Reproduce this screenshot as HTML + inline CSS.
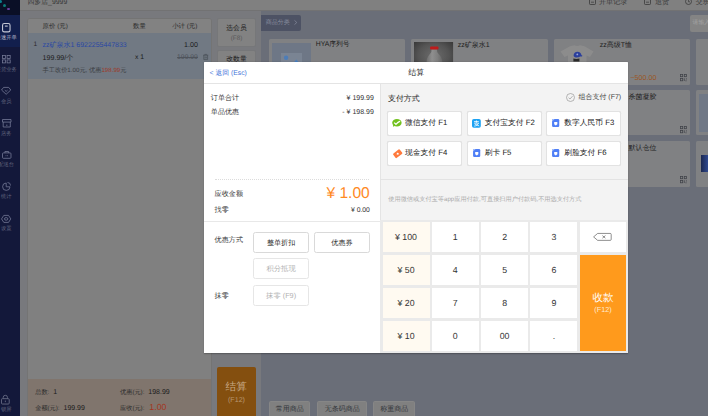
<!DOCTYPE html>
<html lang="zh">
<head>
<meta charset="utf-8">
<title>结算</title>
<style>
*{box-sizing:border-box;margin:0;padding:0}
html,body{width:708px;height:416px;overflow:hidden}
body{position:relative;text-rendering:geometricPrecision;background:#78797d;font-family:"Liberation Sans",sans-serif;color:#1c1c1c;font-size:7px;line-height:1}
.a{position:absolute}
.t{position:absolute;white-space:nowrap;line-height:1}
.r{text-align:right}
.c{text-align:center}
svg{position:absolute;overflow:visible}
/* dimmed page */
#top{left:0;top:0;width:708px;height:11.2px;background:#808080;border-bottom:1px solid #727273}
#side{left:0;top:0;width:20.3px;height:416px;background:#13183a}
#logo{left:0;top:0;width:20.3px;height:15.2px;background:#0a0f26}
#act{left:0;top:15.2px;width:20.3px;height:31.5px;background:#121f4d}
.sl{color:#62667f;font-size:5.3px;width:30px;left:-8.8px;text-align:center}
#right{left:261.2px;top:11px;width:447px;height:406px;background:#6a6e78}
#cart{left:27.3px;top:18.4px;width:184.5px;height:400px;background:#808080;border:0.7px solid #747474;border-radius:3px 3px 0 0;overflow:hidden}
.card{background:#808183;border-radius:1.5px}
.mb{background:#828282;border:0.6px solid #767779;border-radius:2px}
.tab{top:401.4px;height:20px;background:#808080;border:.6px solid #868686;border-radius:1.5px}
/* modal */
#modal{left:203.9px;top:61.8px;width:424.1px;height:291.5px;background:#fff;border-radius:.6px;box-shadow:0 .5px 1.6px rgba(0,0,0,.28)}
.pay{background:#fff;border:0.7px solid #e2e2e2;border-radius:2.2px;height:25.1px;width:74.9px;margin:-.35px 0 0 -.35px;box-shadow:0 0 .6px rgba(0,0,0,.12)}
.pay>*{margin:.35px 0 0 .35px}
.pay .t{font-size:7.78px;color:#222;top:7.3px}
.key{background:#fff;width:47px;height:30.3px;font-size:8.8px;color:#333;text-align:center;line-height:30.2px}
.key.q{background:#fffaf1}
.btn{border:0.7px solid #d9d9d9;border-radius:2.4px;background:#fff;text-align:center;font-size:7.1px;color:#1a1a1a;width:56.2px;height:21.2px;line-height:20.2px;font-weight:500}
.btn.d{color:#b2b2b2;border-color:#e6e6e6;font-size:7.3px;font-weight:400}
</style>
</head>
<body>
<!-- ===== dimmed background page ===== -->
<div class="a" id="right"></div>
<div class="a" id="top"></div>
<div class="t" style="left:27.4px;top:-0.35px;font-size:6.9px;color:#383838">四多店_9999</div>
<div class="t" style="left:599px;top:-0.7px;font-size:7.1px;color:#383838">开单记录</div>
<div class="t" style="left:654.9px;top:-0.7px;font-size:7.1px;color:#383838">退货</div>
<div class="t" style="left:695.8px;top:-0.7px;font-size:7.1px;color:#383838">交班</div>
<svg style="left:589.1px;top:-1.8px" width="7" height="7" viewBox="0 0 7 7"><rect x=".5" y=".5" width="6" height="6" rx=".8" fill="none" stroke="#3a3a3a" stroke-width=".8"/><path d="M2 4.2h3" stroke="#3a3a3a" stroke-width=".7"/></svg>
<svg style="left:644.1px;top:-1.8px" width="7" height="7" viewBox="0 0 7 7"><rect x=".5" y=".5" width="6" height="6" rx=".8" fill="none" stroke="#3a3a3a" stroke-width=".8"/><path d="M2 4.2h3" stroke="#3a3a3a" stroke-width=".7"/></svg>
<svg style="left:685px;top:-1.8px" width="7" height="7" viewBox="0 0 7 7"><circle cx="3.5" cy="3.5" r="3" fill="none" stroke="#3a3a3a" stroke-width=".8"/><path d="M3.5 1.8v2h1.5" stroke="#3a3a3a" stroke-width=".7" fill="none"/></svg>

<!-- sidebar -->
<div class="a" id="side"></div>
<div class="a" id="logo"></div>
<div class="a" id="act"></div>
<div class="a" style="left:-.8px;top:-.2px;width:3.2px;height:3.2px;border-radius:50%;background:#0b7f8c"></div>
<div class="a" style="left:2.8px;top:3.8px;width:3.4px;height:3.4px;border-radius:50%;background:#0c7a78"></div>
<div class="a" style="left:7.4px;top:7.7px;width:2.3px;height:2.3px;border-radius:50%;background:#6a3f9e"></div>
<!-- sidebar icons -->
<svg style="left:1.5px;top:23.1px" width="8.6" height="9.4" viewBox="0 0 8.6 9.4"><rect x=".55" y=".55" width="7.5" height="8.3" rx="1.7" fill="none" stroke="#c3c6d4" stroke-width="1.1"/><path d="M2.9 3.1h2.8" stroke="#c3c6d4" stroke-width="1.1"/></svg>
<div class="t sl" style="top:35.9px;color:#b4b8ca">快速开单</div>
<svg style="left:1.8px;top:55.4px" width="8.7" height="8.3" viewBox="0 0 8.7 8.3" fill="none" stroke="#747995" stroke-width=".8"><rect x=".4" y=".4" width="3.1" height="3"/><rect x="5.1" y=".4" width="3.1" height="3"/><rect x=".4" y="4.9" width="3.1" height="3"/><rect x="5.1" y="4.9" width="3.1" height="3"/></svg>
<div class="t sl" style="top:67.6px">进货业务</div>
<svg style="left:1.2px;top:86.5px" width="10.3" height="7.8" viewBox="0 0 10.3 7.8" fill="none" stroke="#747995" stroke-width=".8"><path d="M2.6.4h5.1l2.1 2.6-4.650 4.300L.5 3z"/><path d="M3.800 3.200l1.350 1.200 1.350-1.200"/></svg>
<div class="t sl" style="top:99.600px">会员</div>
<svg style="left:1.5px;top:118.9px" width="9.5" height="8.500" viewBox="0 0 9.500 8.500" fill="none" stroke="#747995" stroke-width=".8"><path d="M.5.500h8.500v2.600H.5z"/><path d="M1.200 3.100v4.900h7.100V3.100"/><path d="M4 6.200h1.500"/></svg>
<div class="t sl" style="top:132px">店务</div>
<svg style="left:1.5px;top:151.200px" width="9.500" height="7.800" viewBox="0 0 9.500 7.800" fill="none" stroke="#747995" stroke-width=".8"><rect x=".5" y="1.900" width="8.500" height="5.400" rx=".9"/><path d="M2.900 1.900V.5h3.700v1.400M3.600 4.700h.8M5.200 4.700h.8"/></svg>
<div class="t sl" style="top:163.200px">配送台</div>
<svg style="left:1.800px;top:182.200px" width="9" height="9" viewBox="0 0 9 9" fill="none" stroke="#747995" stroke-width=".8"><path d="M4.200 1a3.700 3.700 0 1 0 3.800 3.800H4.200z"/><path d="M5.500.5a3 3 0 0 1 3 3"/></svg>
<div class="t sl" style="top:195.200px">统计</div>
<svg style="left:1.200px;top:214.500px" width="10.300" height="7.800" viewBox="0 0 10.300 7.800" fill="none" stroke="#747995" stroke-width=".8"><path d="M2.800.4h4.700l2.300 3.500-2.300 3.500H2.800L.5 3.900z"/><ellipse cx="5.150" cy="3.900" rx="1.700" ry="1.300"/></svg>
<div class="t sl" style="top:226.900px">设置</div>
<svg style="left:1.3px;top:395px" width="8.7" height="9.6" viewBox="0 0 7.400 8.600" preserveAspectRatio="none" fill="none" stroke="#656982" stroke-width=".8"><rect x=".4" y="3.300" width="6.600" height="4.800" rx=".8"/><path d="M1.900 3.300V2.100a1.800 1.800 0 0 1 3.600 0v1.200M3.700 5v1.400"/></svg>
<div class="t sl" style="top:407.800px">锁屏</div>

<!-- cart panel -->
<div class="a" id="cart">
  <div class="a" style="left:0;top:0;width:185px;height:14px;background:#828282"></div>
  <div class="a" style="left:0;top:14px;width:185px;height:45.8px;background:#717983"></div>
  <div class="a" style="left:0;top:359.8px;width:185px;height:40px;background:#80756d"></div>
</div>
<div class="t" style="left:42.6px;top:23.8px;font-size:6.4px;color:#2b2b2b">原价 (元)</div>
<div class="t" style="left:133px;top:23.8px;font-size:6.4px;color:#2b2b2b">数量</div>
<div class="t r" style="left:147.4px;width:50px;top:23.8px;font-size:6.4px;color:#2b2b2b">小计 (元)</div>
<div class="t" style="left:33.6px;top:41.8px;font-size:6.6px;color:#2b2b2b">1</div>
<div class="t" style="left:42.6px;top:41.6px;font-size:6.98px;color:#2a48a3">zz矿泉水1 6922255447833</div>
<div class="t r" style="left:147.9px;width:50px;top:41.7px;font-size:7.1px;color:#1c1c1c">1.00</div>
<div class="t" style="left:42.6px;top:54.7px;font-size:7.1px;color:#1c1c1c">199.99/个</div>
<div class="t" style="left:135px;top:54.6px;font-size:6.8px;color:#1c1c1c">x 1</div>
<div class="t r" style="left:147.9px;width:50px;top:54.5px;font-size:6.8px;color:#4f545c;text-decoration:line-through">199.99</div>
<svg style="left:202.9px;top:53.8px" width="5.4" height="6" viewBox="0 0 5.4 6" fill="none" stroke="#4a5058" stroke-width=".75"><path d="M.2 1.2h5M1.8 1.2V.4h1.8v.8M.8 1.2v4.4h3.8V1.2M2.1 2.6v1.8M3.3 2.6v1.8"/></svg>
<div class="t" style="left:42.6px;top:67.8px;font-size:6.2px;color:#3a3d42">手工改价1.00元, 优惠<span style="color:#9c3a2a">198.99</span>元</div>
<!-- totals -->
<div class="t" style="left:35.2px;top:388.5px;font-size:6.2px;color:#2b2b2b">总数:<span style="font-size:7px;color:#1c1c1c">&nbsp; 1</span></div>
<div class="t" style="left:120px;top:388.5px;font-size:6.2px;color:#2b2b2b">优惠(元):<span style="font-size:7px;color:#1c1c1c">&nbsp; 198.99</span></div>
<div class="t" style="left:35.2px;top:404.5px;font-size:6.2px;color:#2b2b2b">金额(元):<span style="font-size:7px;color:#1c1c1c">&nbsp; 199.99</span></div>
<div class="t" style="left:120px;top:403.1px;font-size:6.2px;color:#2b2b2b">应收(元):<span style="font-size:8.8px;color:#a3361f">&nbsp; 1.00</span></div>

<!-- middle buttons -->
<div class="a mb" style="left:216.8px;top:17.9px;width:39.2px;height:29px"></div>
<div class="t c" style="left:217.4px;width:38.2px;top:26.4px;font-size:6.8px;color:#1c1c1c;font-weight:500">选会员</div>
<div class="t c" style="left:217.4px;width:38.2px;top:35.6px;font-size:6.4px;color:#5a5a5a">(F8)</div>
<div class="a mb" style="left:216.8px;top:49.8px;width:39.2px;height:29px"></div>
<div class="t c" style="left:217.4px;width:38.2px;top:57.2px;font-size:6.8px;color:#1c1c1c;font-weight:500">改数量</div>
<div class="a" style="left:217.2px;top:367.3px;width:38.6px;height:55px;background:#844f0f;border-radius:2px"></div>
<div class="t c" style="left:216.9px;width:38.6px;top:382.2px;font-size:10.6px;color:#c6a884">结算</div>
<div class="t c" style="left:217.2px;width:38.6px;top:396.8px;font-size:7.1px;color:#b8976f">(F12)</div>

<!-- product area -->
<div class="a" style="left:261.2px;top:15px;width:39.8px;height:16.2px;background:#4d5264;border-radius:0 2px 2px 0"></div>
<div class="t" style="left:265.8px;top:19.7px;font-size:6px;color:#878c9e">商品分类</div>
<svg style="left:293.8px;top:20.4px" width="3.4" height="5" viewBox="0 0 3.4 5"><path d="M.5.4l2.300 2.100L.5 4.600" fill="none" stroke="#878c9e" stroke-width=".7"/></svg>
<div class="a" style="left:690px;top:15.4px;width:30px;height:16.8px;background:#848484;border-radius:2px"></div>
<div class="t" style="left:692.6px;top:20.6px;font-size:5.8px;color:#a2a2a2">请输入</div>

<!-- cards row1 -->
<div class="a card" style="left:268.6px;top:39px;width:136.8px;height:45.6px"></div>
<div class="a" style="left:272.2px;top:42.6px;width:38.7px;height:30px;background:#6e7786"></div>
<div class="a" style="left:281px;top:53px;width:21px;height:16px;background:#7a8493"></div>
<svg style="left:281px;top:53px" width="21" height="16" viewBox="0 0 21 16"><circle cx="5.100" cy="4.800" r="2.200" fill="#4d7db8"/><path d="M2 16l5-5.500 3 2.500 5.300-6.600L21 13v3z" fill="#4a80c0"/></svg>
<div class="t" style="left:315.8px;top:42.2px;font-size:6.8px;color:#1c1c1c">HYA序列号</div>
<div class="a card" style="left:410.5px;top:39px;width:137.9px;height:45.6px"></div>
<svg style="left:413.9px;top:42.3px" width="39.1" height="30" viewBox="0 0 39.1 30"><defs><radialGradient id="bg1" cx="50%" cy="45%" r="65%"><stop offset="0" stop-color="#6c6c6c"/><stop offset=".6" stop-color="#545454"/><stop offset="1" stop-color="#3a3a3a"/></radialGradient><linearGradient id="bt1" x1="0" x2="1"><stop offset="0" stop-color="#6f6f6f"/><stop offset=".35" stop-color="#8f8f8f"/><stop offset=".7" stop-color="#7e7e7e"/><stop offset="1" stop-color="#666"/></linearGradient></defs><rect width="39.1" height="30" fill="url(#bg1)"/><path d="M17.400 7.200h5.700v2.200c0 1.500 4.900 4.600 5.200 9.600V30H12.600V19c.3-5 4.800-8.100 4.800-9.600z" fill="url(#bt1)"/><rect x="16.100" y="4.400" width="8.400" height="3" rx="1" fill="#bd1b1b"/></svg>
<div class="t" style="left:457.7px;top:42.4px;font-size:7px;color:#1c1c1c">zz矿泉水1</div>
<div class="a card" style="left:553.5px;top:39px;width:136.8px;height:45.6px"></div>
<div class="t" style="left:599.8px;top:42.4px;font-size:7px;color:#1c1c1c">zz高级T恤</div>
<svg style="left:559.5px;top:44.600px" width="34" height="20" viewBox="0 0 34 20"><path d="M10 1.200l4.500-1c1.500 1 4 1 5.500 0l4.500 1 9 5.300-3.500 5.500-3.500-1.500V20H8V10.500L4.500 12 .5 6.500z" fill="#8c8c8c"/><path d="M13.600 10.500c0-2.300 1.700-3.700 3.900-3.700s3.700 1.300 3.900 3.200l1 .8c-.2.700-1.500.9-2.400.8-1.500 1.400-6.400 1.300-6.400-1.100z" fill="#2b3f9c"/><path d="M13.400 13.500c1.500.5 4.500.5 6 0v3h-6z" fill="#2a2a2a"/><circle cx="17.300" cy="9.400" r=".9" fill="#9aa6d8"/></svg>
<div class="t" style="left:630.3px;top:73.9px;font-size:7.2px;color:#9a5626">~500.00</div>
<div class="a card" style="left:696px;top:39px;width:20px;height:45.6px"></div>
<!-- cards row2 -->
<div class="a card" style="left:553.5px;top:89.6px;width:136.8px;height:45.4px"></div>
<div class="t" style="left:628.4px;top:93.6px;font-size:7px;color:#1c1c1c">杀菌凝胶</div>
<div class="a card" style="left:696px;top:89.6px;width:20px;height:45.4px"></div>
<div class="a" style="left:699.2px;top:93.6px;width:20px;height:38px;background:#707886"></div>
<!-- cards row3 -->
<div class="a card" style="left:553.5px;top:140.6px;width:136.8px;height:46.2px"></div>
<div class="t" style="left:628.4px;top:145.4px;font-size:7px;color:#1c1c1c">默认仓位</div>
<div class="a card" style="left:696px;top:140.6px;width:20px;height:46.2px"></div>
<div class="a" style="left:700.6px;top:155.4px;width:10px;height:16.8px;background:linear-gradient(90deg,#1c2850,#2c4486 60%,#3a5a9c)"></div>
<!-- qr icons -->
<svg style="left:679.8px;top:73.8px" width="7" height="7.4" viewBox="0 0 7 7.4" fill="none" stroke="#3f4248" stroke-width=".75"><rect x=".4" y=".4" width="2.3" height="2.3"/><rect x="4.3" y=".4" width="2.3" height="2.3"/><rect x=".4" y="4.5" width="2.3" height="2.3"/><path d="M4.3 4.3v2.7M6.4 4.3v1.2M5.4 6.8h1.2"/></svg>
<svg style="left:679.8px;top:125.6px" width="7" height="7.4" viewBox="0 0 7 7.4" fill="none" stroke="#3f4248" stroke-width=".75"><rect x=".4" y=".4" width="2.3" height="2.3"/><rect x="4.3" y=".4" width="2.3" height="2.3"/><rect x=".4" y="4.5" width="2.3" height="2.3"/><path d="M4.3 4.3v2.7M6.4 4.3v1.2M5.4 6.8h1.2"/></svg>
<svg style="left:679.8px;top:176.4px" width="7" height="7.4" viewBox="0 0 7 7.4" fill="none" stroke="#3f4248" stroke-width=".75"><rect x=".4" y=".4" width="2.3" height="2.3"/><rect x="4.3" y=".4" width="2.3" height="2.3"/><rect x=".4" y="4.5" width="2.3" height="2.3"/><path d="M4.3 4.3v2.7M6.4 4.3v1.2M5.4 6.8h1.2"/></svg>
<!-- bottom tabs -->
<div class="a tab" style="left:268.9px;width:41.6px"></div>
<div class="t c" style="left:268.9px;width:41.6px;top:406.1px;font-size:7px;color:#33363b">常用商品</div>
<div class="a tab" style="left:317.4px;width:49.8px"></div>
<div class="t c" style="left:317.4px;width:49.8px;top:406.1px;font-size:7px;color:#33363b">无条码商品</div>
<div class="a tab" style="left:373.2px;width:42.1px"></div>
<div class="t c" style="left:373.2px;width:42.1px;top:406.1px;font-size:7px;color:#33363b">称重商品</div>

<!-- ===== modal ===== -->
<div class="a" id="modal">
  <!-- right pane bg -->
  <div class="a" style="left:176.2px;top:22px;width:247.9px;height:269.5px;background:#f3f3f3"></div>
  <div class="a" style="left:0;top:21.7px;width:424.1px;height:.7px;background:#e4e4e4"></div>
  <div class="a" style="left:175.9px;top:22px;width:.7px;height:269.5px;background:#e4e4e4"></div>
  <div class="a" style="left:176.2px;top:117.4px;width:247.9px;height:.8px;background:#e3e3e3"></div>
  <div class="a" style="left:176.2px;top:158.2px;width:247.9px;height:133.3px;background:#eaeaea"></div>
  <div class="a" style="left:0;top:159.1px;width:176px;height:.7px;background:#e8e8e8"></div>
</div>
<!-- modal header -->
<div class="t" style="left:209.6px;top:70.8px;font-size:6.8px;color:#3f74d9">&lt; 返回 (Esc)</div>
<div class="t c" style="left:204.2px;width:424.1px;top:69px;font-size:8px;color:#222">结算</div>
<!-- left pane -->
<div class="t" style="left:210.8px;top:95.3px;font-size:7.1px;color:#333">订单合计</div>
<div class="t r" style="left:313.8px;width:60px;top:95.4px;font-size:7px;color:#333">¥ 199.99</div>
<div class="t" style="left:210.8px;top:109.1px;font-size:7.1px;color:#333">单品优惠</div>
<div class="t r" style="left:313.8px;width:60px;top:109.2px;font-size:7px;color:#333">- ¥ 198.99</div>
<div class="a" style="left:214.6px;top:179.3px;width:154.6px;height:0;border-top:.7px dotted #dcdcdc"></div>
<div class="t" style="left:214.6px;top:191.4px;font-size:7.1px;color:#333">应收金额</div>
<div class="t r" style="left:289.8px;width:80px;top:185.5px;font-size:15.6px;color:#ff8a1f">¥ 1.00</div>
<div class="t" style="left:214.6px;top:207px;font-size:7.1px;color:#333">找零</div>
<div class="t r" style="left:309.9px;width:60px;top:207.9px;font-size:6.8px;color:#333">¥ 0.00</div>
<div class="t" style="left:214.6px;top:236.8px;font-size:7.1px;color:#333">优惠方式</div>
<div class="a btn" style="left:253px;top:231.9px">整单折扣</div>
<div class="a btn" style="left:314.2px;top:231.9px;width:55.6px">优惠券</div>
<div class="a btn d" style="left:253px;top:258.3px">积分抵现</div>
<div class="t" style="left:214.6px;top:292.6px;font-size:7.1px;color:#333">抹零</div>
<div class="a btn d" style="left:253px;top:285.2px">抹零 (F9)</div>
<!-- right pane -->
<div class="t" style="left:388px;top:94.6px;font-size:7.9px;color:#222">支付方式</div>
<svg style="left:566.4px;top:93.2px" width="9" height="9" viewBox="0 0 8.8 8.8" fill="none" stroke="#9a9a9a" stroke-width=".7"><circle cx="4.4" cy="4.4" r="3.9"/><path d="M2.5 4.5l1.4 1.4 2.5-2.8"/></svg>
<div class="t r" style="left:561.2px;width:60px;top:94.1px;font-size:7px;color:#444">组合支付 (F7)</div>
<!-- pay buttons -->
<div class="a pay" style="left:387.5px;top:110.9px"><svg style="left:3.9px;top:7.2px" width="9.6" height="8.2" viewBox="0 0 9.2 7.6" preserveAspectRatio="none"><ellipse cx="4.7" cy="3.5" rx="4.5" ry="3.5" fill="#72c11f"/><path d="M1.2 5.2L.9 7.3l2.2-1z" fill="#72c11f"/><path d="M2.3 3.7c.7.3 1.1.7 1.5 1.2C4.8 3.7 6 2.8 7.4 2.2" stroke="#fff" stroke-width="1.1" fill="none" stroke-linecap="round"/></svg><div class="t" style="left:16.5px">微信支付 F1</div></div>
<div class="a pay" style="left:467.2px;top:110.9px"><svg style="left:4px;top:6.9px" width="8.8" height="8.8" viewBox="0 0 8.8 8.8"><rect width="8.8" height="8.8" rx="1.8" fill="#1ca2f3"/><path d="M2 2.6h4.8M4.4 1.4v2.4M2.2 4.1h4.4c-.7 1.8-2.200 2.800-4.400 3M2.600 5c1.400.4 3 1.200 4.600 2" stroke="#fff" stroke-width=".8" fill="none"/></svg><div class="t" style="left:16.5px">支付宝支付 F2</div></div>
<div class="a pay" style="left:546.8px;top:110.9px"><svg style="left:4.6px;top:7.3px" width="7.3" height="7.9" viewBox="0 0 7.1 7.8"><rect width="7.1" height="7.8" rx="1.2" fill="#4f7ff6"/><path d="M0 2.400V1.200A1.200 1.200 0 0 1 1.200 0H2.600z" fill="#a6bffb"/><path d="M2.100 2.900h3.100v2.300L3.650 6.500 2.100 5.200z" fill="#fff"/></svg><div class="t" style="left:16.5px">数字人民币 F3</div></div>
<div class="a pay" style="left:387.5px;top:141.2px"><svg style="left:4.2px;top:6.4px" width="9.4" height="9.4" viewBox="0 0 9.4 9.4"><g transform="rotate(-38 4.7 4.7)"><rect x=".5" y="1.9" width="8.4" height="5.6" rx="1" fill="#ff7a3d"/><rect x="3.800" y="3.800" width="1.800" height="1.800" fill="#fff" transform="rotate(45 4.7 4.7)"/></g></svg><div class="t" style="left:16.5px">现金支付 F4</div></div>
<div class="a pay" style="left:467.2px;top:141.2px"><svg style="left:4.6px;top:7.3px" width="7.3" height="7.9" viewBox="0 0 7.1 7.8"><rect width="7.1" height="7.8" rx="1.2" fill="#4f7ff6"/><path d="M0 2.400V1.200A1.200 1.200 0 0 1 1.200 0H2.600z" fill="#a6bffb"/><path d="M2.100 2.900h3.100v2.300L3.650 6.500 2.100 5.200z" fill="#fff"/></svg><div class="t" style="left:16.5px">刷卡 F5</div></div>
<div class="a pay" style="left:546.8px;top:141.2px"><svg style="left:4.6px;top:7.3px" width="7.3" height="7.9" viewBox="0 0 7.1 7.8"><rect width="7.1" height="7.8" rx="1.2" fill="#4f7ff6"/><path d="M0 2.400V1.200A1.200 1.200 0 0 1 1.200 0H2.600z" fill="#a6bffb"/><path d="M2.100 2.900h3.100v2.300L3.650 6.500 2.100 5.200z" fill="#fff"/></svg><div class="t" style="left:16.5px">刷脸支付 F6</div></div>
<div class="t" style="left:388.3px;top:197px;font-size:6.19px;color:#aaa">使用微信或支付宝等app应用付款,可直接扫用户付款码,不用选支付方式</div>
<!-- keypad -->
<div class="a key q" style="left:382.5px;top:222.1px">¥ 100</div>
<div class="a key" style="left:431.8px;top:222.1px">1</div>
<div class="a key" style="left:481.1px;top:222.1px">2</div>
<div class="a key" style="left:530.4px;top:222.1px">3</div>
<div class="a key" style="left:579.7px;top:222.1px;width:46.4px"></div>
<div class="a key q" style="left:382.5px;top:254.9px">¥ 50</div>
<div class="a key" style="left:431.8px;top:254.9px">4</div>
<div class="a key" style="left:481.1px;top:254.9px">5</div>
<div class="a key" style="left:530.4px;top:254.9px">6</div>
<div class="a key q" style="left:382.5px;top:287.8px">¥ 20</div>
<div class="a key" style="left:431.8px;top:287.8px">7</div>
<div class="a key" style="left:481.1px;top:287.8px">8</div>
<div class="a key" style="left:530.4px;top:287.8px">9</div>
<div class="a key q" style="left:382.5px;top:320.7px">¥ 10</div>
<div class="a key" style="left:431.8px;top:320.7px">0</div>
<div class="a key" style="left:481.1px;top:320.7px">00</div>
<div class="a key" style="left:530.4px;top:320.7px">.</div>
<div class="a" style="left:579.6px;top:254.7px;width:46.5px;height:96.6px;background:#ff9a1c"></div>
<div class="t c" style="left:580.1px;width:45.8px;top:292.6px;font-size:10.6px;color:#fff">收款</div>
<div class="t c" style="left:580.1px;width:45.8px;top:306.2px;font-size:7.3px;color:#ffe9cf">(F12)</div>
<svg style="left:593.2px;top:233.1px" width="18.6" height="7.8" viewBox="0 0 18.4 9" preserveAspectRatio="none" fill="none" stroke="#555" stroke-width=".7"><path d="M4.6.5h12.4a1 1 0 0 1 1 1v6a1 1 0 0 1-1 1H4.6L.6 4.5z"/><path d="M9.3 3l3 3M12.3 3l-3 3"/></svg>
</body>
</html>
